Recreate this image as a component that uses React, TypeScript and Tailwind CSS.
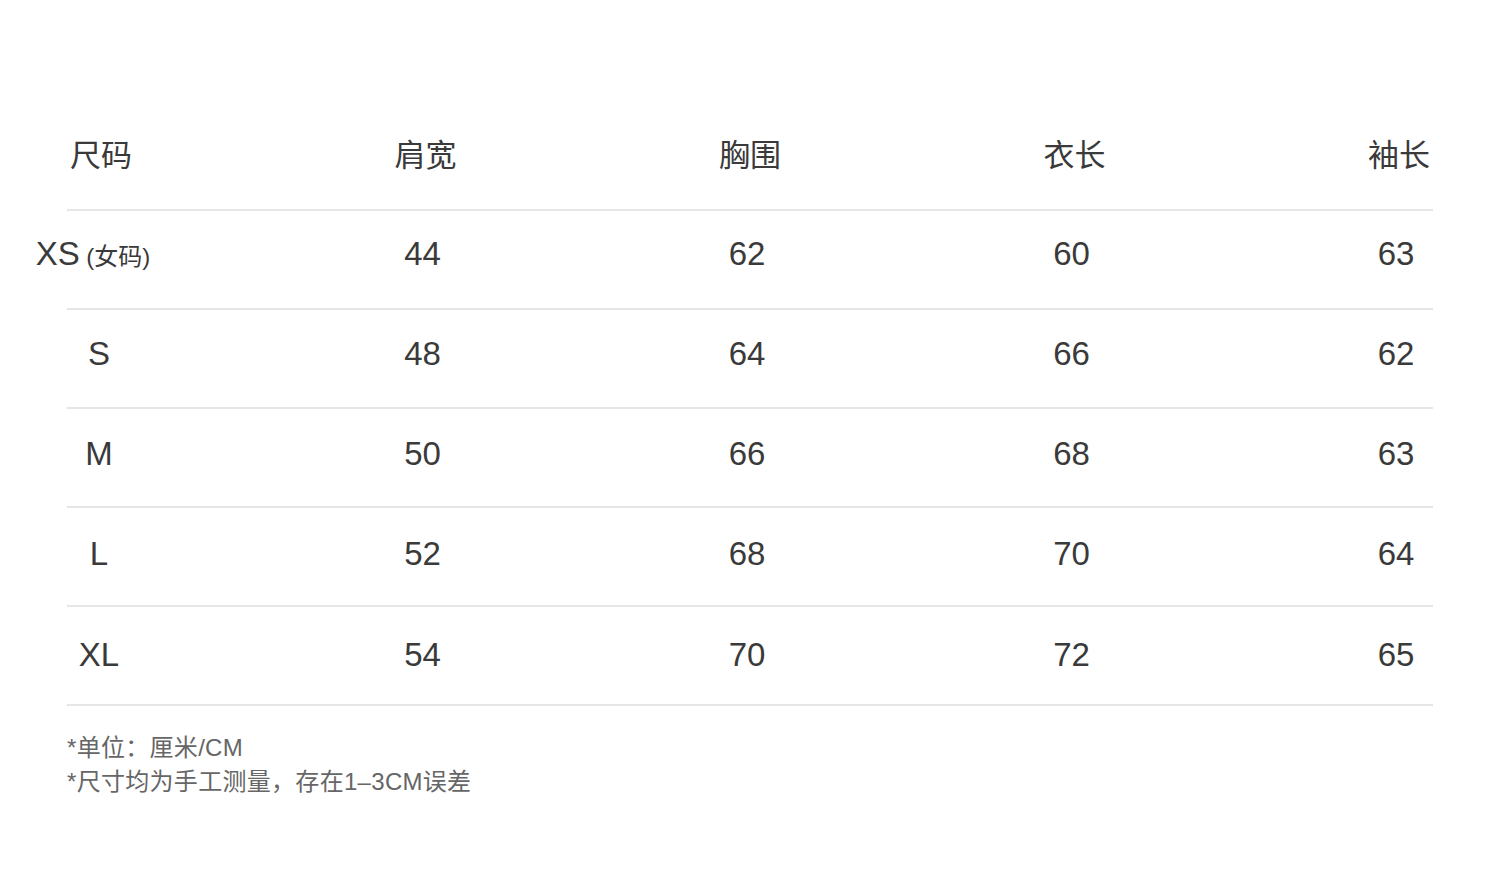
import React from "react";

const headers = ["尺码", "肩宽", "胸围", "衣长", "袖长"];
const rows: { size: string; vals: string[]; pt: string }[] = [
  { size: "XS", vals: ["44", "62", "60", "63"], pt: "pt-[25px]" },
  { size: "S", vals: ["48", "64", "66", "62"], pt: "pt-[26px]" },
  { size: "M", vals: ["50", "66", "68", "63"], pt: "pt-[27px]" },
  { size: "L", vals: ["52", "68", "70", "64"], pt: "pt-[28px]" },
  { size: "XL", vals: ["54", "70", "72", "65"], pt: "pt-[30px]" },
];

const font = { fontFamily: '"Liberation Sans", "Noto Sans CJK SC", sans-serif' };

export default function App() {
  return (
    <div className="w-[1500px] h-[875px] bg-white text-[#3a3a3a]" style={font}>
      <div className="px-[67px] pt-[112px]">
        <div className="flex justify-between h-[99px] border-b-2 border-[#e6e6e6] pt-[26px]">
          {headers.map((h) => (
            <div key={h} className="w-[68px] flex justify-center text-[31px] leading-[36px] whitespace-nowrap">
              {h}
            </div>
          ))}
        </div>
        {rows.map((r) => (
          <div key={r.size} className={`flex justify-between h-[99px] border-b-2 border-[#e6e6e6] ${r.pt}`}>
            <div className="w-[68px] flex justify-center text-[33px] leading-[36px] whitespace-nowrap">
              {r.size === "XS" ? (
                <span className="mr-[16px] flex items-baseline">
                  <span>XS</span>
                  <span className="text-[24px] whitespace-pre"> (女码)</span>
                </span>
              ) : (
                <span className="mr-[4px]">{r.size}</span>
              )}
            </div>
            {r.vals.map((v, i) => (
              <div key={i} className="w-[68px] flex justify-center text-[33px] leading-[36px]">
                <span className="mr-[6px]">{v}</span>
              </div>
            ))}
          </div>
        ))}
        <div className="mt-[25px] text-[24px] leading-[34px] text-[#666666] tracking-[0.3px]">
          <div>*单位：厘米/CM</div>
          <div>*尺寸均为手工测量，存在1–3CM误差</div>
        </div>
      </div>
    </div>
  );
}
